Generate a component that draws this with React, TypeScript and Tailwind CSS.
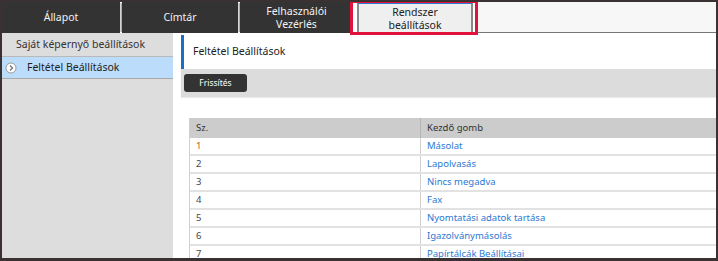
import React from 'react';

const rows = [
  { n: '1', label: 'Másolat', first: true },
  { n: '2', label: 'Lapolvasás' },
  { n: '3', label: 'Nincs megadva' },
  { n: '4', label: 'Fax' },
  { n: '5', label: 'Nyomtatási adatok tartása' },
  { n: '6', label: 'Igazolványmásolás' },
  { n: '7', label: 'Papírtálcák Beállításai' },
];

function Tab({ w, children }: { w: string; children: React.ReactNode }) {
  return (
    <div className={`${w} h-full bg-[#333333] text-[#f2f2f2] text-[10.5px] leading-[13px] flex items-center justify-center text-center`}>
      {children}
    </div>
  );
}

function Sep() {
  return <div className="w-[2px] h-[29px] mt-[1px] bg-gradient-to-r from-[#e8e8e8] to-[#9a9a9a]" />;
}

export default function App() {
  return (
    <div
      className="relative w-[718px] h-[261px] overflow-hidden bg-white border-l-2 border-t-2 border-r-2 border-b-[3px] border-[#3a3232] flex flex-col"
      style={{ fontFamily: '"Noto Sans", "Open Sans", sans-serif' }}
    >
      {/* tab bar */}
      <div className="flex h-[31px] shrink-0">
        <Tab w="w-[118px]">Állapot</Tab>
        <Sep />
        <Tab w="w-[116px]">Címtár</Tab>
        <Sep />
        <Tab w="w-[113px]">
          <span>
            Felhasználói
            <br />
            Vezérlés
          </span>
        </Tab>
        <div className="w-[124px] h-full bg-white pl-[4px] pr-[4px] pt-[1px]">
          <div className="h-full bg-[#efefef] border-x-2 border-[#8a8a8a] border-t border-t-[#2d7bd0] text-[#222] text-[10.5px] leading-[13px] flex items-center justify-center text-center">
            <span>
              Rendszer
              <br />
              beállítások
            </span>
          </div>
        </div>
        <div className="flex-1 bg-[#f7f7f7] border-b border-[#777]" />
      </div>

      {/* highlight */}
      <div className="absolute left-[348px] top-[-2px] w-[128px] h-[35px] border-[3px] border-[#e3123c]" />

      <div className="flex flex-1 min-h-0">
        {/* sidebar */}
        <div className="w-[171px] shrink-0 bg-[#dddddd] pt-[1px]">
          <div className="h-[23px] border-b border-[#b9b9b9] text-[10.5px] text-[#333] flex items-center pl-[14px]">
            Saját képernyő beállítások
          </div>
          <div className="h-[22px] bg-[#bcdcfb] border-b border-[#a9a9a9] text-[10.5px] text-[#222] flex items-center pl-[3px]">
            <svg width="12" height="12" viewBox="0 0 12 12" className="mr-[10px]">
              <circle cx="6" cy="6" r="5" fill="#fff" stroke="#9a9a9a" strokeWidth="1" />
              <path d="M5 3.5 L7.5 6 L5 8.5" fill="none" stroke="#777" strokeWidth="1.4" />
            </svg>
            Feltétel Beállítások
          </div>
        </div>

        {/* main */}
        <div className="flex-1 ml-[8px] pt-[2px] min-w-0">
          <div className="h-[34px] border-l-[3px] border-[#1b6fc2] pl-[9px] flex items-center text-[10.5px] text-[#222]">
            Feltétel Beállítások
          </div>
          <div className="h-[28px] bg-[#dcdcdc] flex items-center pl-[3px] shadow-[0_1px_1px_rgba(0,0,0,0.08)]">
            <button className="w-[63px] h-[18px] rounded-[3px] bg-[#333333] text-white text-[8.5px] leading-none">
              Frissítés
            </button>
          </div>
          <div className="ml-[8px] mt-[21px] border-l border-[#d0d0d0] text-[9.5px]">
            <div className="flex h-[20px] bg-[#cccccc] text-[#333]">
              <div className="w-[231px] pl-[6px] flex items-center border-r border-[#b5b5b5]">Sz.</div>
              <div className="flex-1 pl-[6px] flex items-center">Kezdő gomb</div>
            </div>
            {rows.map((r) => (
              <div key={r.n} className="flex h-[18px] border-b-2 border-[#e2e2e2]">
                <div className={`w-[231px] pl-[6px] flex items-center border-r border-[#d0d0d0] ${r.first ? 'text-[#b0602a]' : 'text-[#444]'}`}>
                  {r.n}
                </div>
                <div className="flex-1 pl-[6px] flex items-center text-[#2a78d2]">{r.label}</div>
              </div>
            ))}
          </div>
        </div>
      </div>
    </div>
  );
}
